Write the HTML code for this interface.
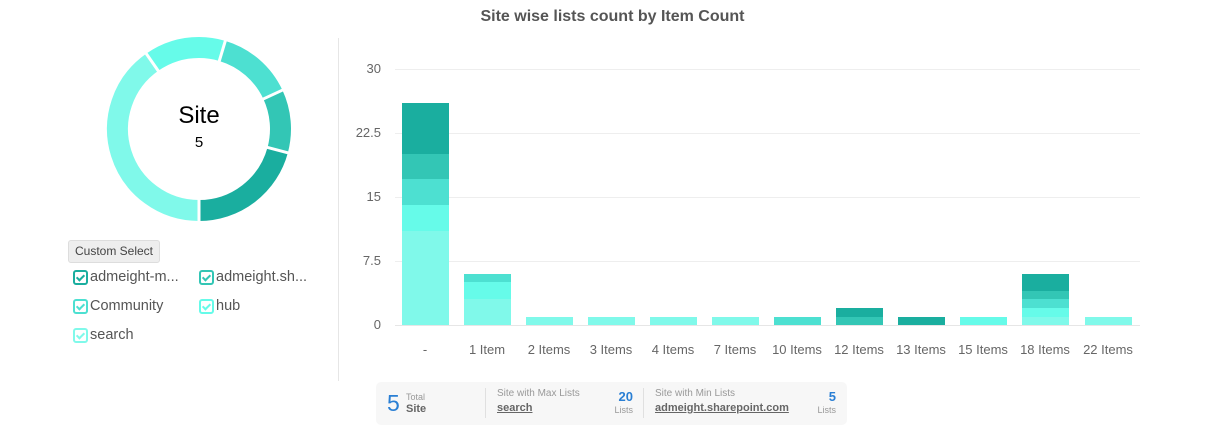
<!DOCTYPE html>
<html><head><meta charset="utf-8"><style>
body{margin:0;width:1213px;height:440px;background:#fff;font-family:"Liberation Sans",sans-serif;position:relative;overflow:hidden}
.a{position:absolute}
.t{font-size:16px;font-weight:bold;color:#555;left:0;width:1225px;text-align:center;top:8px}
.yl{font-size:13px;color:#666;right:832px;text-align:right}
.xl{font-size:13px;color:#666;width:70px;text-align:center;top:342px}
.bar{position:absolute;width:47px}
.cb{position:absolute;font-size:14.5px;color:#555;display:flex;align-items:center}
.cb i{display:inline-block;width:11px;height:11px;border:2px solid;border-radius:3px;margin-right:2px;position:relative;box-sizing:content-box}
.cb i:after{content:"";position:absolute;left:3px;top:1px;width:3px;height:6px;border:solid;border-width:0 2px 2px 0;transform:rotate(45deg);border-color:inherit}
</style></head><body>
<div class="a t">Site wise lists count by Item Count</div>
<svg class="a" style="left:0;top:0" width="340" height="240">
<g fill="none" stroke-width="21">
<path d="M199 47.5 A81.5 81.5 0 0 1 222.3 50.9" stroke="#66fbe9"/>
<path d="M152.3 62.2 A81.5 81.5 0 0 1 199 47.5" stroke="#66fbe9"/>
<path d="M222.3 50.9 A81.5 81.5 0 0 1 272.9 94.6" stroke="#4de0d1"/>
<path d="M272.9 94.6 A81.5 81.5 0 0 1 277.7 150.1" stroke="#33c6b5"/>
<path d="M277.7 150.1 A81.5 81.5 0 0 1 199 210.5" stroke="#1aae9f"/>
<path d="M199 210.5 A81.5 81.5 0 0 1 152.3 62.2" stroke="#80f9ea"/>
</g>
<g stroke="#fff" stroke-width="3">
<line x1="218.7" y1="62.9" x2="225.9" y2="38.9"/><line x1="261.5" y1="99.8" x2="284.2" y2="89.3"/>
<line x1="265.6" y1="146.9" x2="289.8" y2="153.3"/><line x1="199" y1="198" x2="199" y2="223"/>
<line x1="159.4" y1="72.5" x2="145.1" y2="52"/></g>
<text x="199" y="123" text-anchor="middle" font-size="24" fill="#000" font-family="Liberation Sans">Site</text>
<text x="199" y="147" text-anchor="middle" font-size="15" fill="#000" font-family="Liberation Sans">5</text>
</svg>
<div class="a" style="left:68px;top:240px;width:90px;height:21px;background:#eee;border:1px solid #ddd;border-radius:3px;font-size:12px;color:#444;text-align:center;line-height:21px">Custom Select</div>
<div class="cb" style="left:73px;top:269px"><i style="border-color:#1aae9f"></i>admeight-m...</div>
<div class="cb" style="left:199px;top:269px"><i style="border-color:#33c6b5"></i>admeight.sh...</div>
<div class="cb" style="left:73px;top:298px"><i style="border-color:#4de0d1"></i>Community</div>
<div class="cb" style="left:199px;top:298px"><i style="border-color:#66fbe9"></i>hub</div>
<div class="cb" style="left:73px;top:327px"><i style="border-color:#80f9ea"></i>search</div>
<div class="a" style="left:338px;top:38px;width:1px;height:343px;background:#e6e6e6"></div>
<div class="a" style="left:395px;top:69px;width:745px;height:1px;background:#eee"></div>
<div class="a" style="left:395px;top:133px;width:745px;height:1px;background:#eee"></div>
<div class="a" style="left:395px;top:197px;width:745px;height:1px;background:#eee"></div>
<div class="a" style="left:395px;top:261px;width:745px;height:1px;background:#eee"></div>
<div class="a" style="left:395px;top:325px;width:745px;height:1px;background:#e6e6e6"></div>
<div class="a yl" style="top:61px">30</div><div class="a yl" style="top:125px">22.5</div>
<div class="a yl" style="top:189px">15</div><div class="a yl" style="top:253px">7.5</div>
<div class="a yl" style="top:317px">0</div>
<div class="bar" style="left:402px;top:103px;height:51px;background:#1aae9f"></div>
<div class="bar" style="left:402px;top:154px;height:25px;background:#33c6b5"></div>
<div class="bar" style="left:402px;top:179px;height:26px;background:#4de0d1"></div>
<div class="bar" style="left:402px;top:205px;height:26px;background:#66fbe9"></div>
<div class="bar" style="left:402px;top:231px;height:94px;background:#80f9ea"></div>
<div class="bar" style="left:464px;top:274px;height:8px;background:#4de0d1"></div>
<div class="bar" style="left:464px;top:282px;height:17px;background:#66fbe9"></div>
<div class="bar" style="left:464px;top:299px;height:26px;background:#80f9ea"></div>
<div class="bar" style="left:526px;top:317px;height:8px;background:#80f9ea"></div>
<div class="bar" style="left:588px;top:317px;height:8px;background:#80f9ea"></div>
<div class="bar" style="left:650px;top:317px;height:8px;background:#80f9ea"></div>
<div class="bar" style="left:712px;top:317px;height:8px;background:#80f9ea"></div>
<div class="bar" style="left:774px;top:317px;height:8px;background:#4de0d1"></div>
<div class="bar" style="left:836px;top:308px;height:9px;background:#1aae9f"></div>
<div class="bar" style="left:836px;top:317px;height:8px;background:#33c6b5"></div>
<div class="bar" style="left:898px;top:317px;height:8px;background:#1aae9f"></div>
<div class="bar" style="left:960px;top:317px;height:8px;background:#66fbe9"></div>
<div class="bar" style="left:1022px;top:274px;height:17px;background:#1aae9f"></div>
<div class="bar" style="left:1022px;top:291px;height:8px;background:#33c6b5"></div>
<div class="bar" style="left:1022px;top:299px;height:9px;background:#4de0d1"></div>
<div class="bar" style="left:1022px;top:308px;height:9px;background:#66fbe9"></div>
<div class="bar" style="left:1022px;top:317px;height:8px;background:#80f9ea"></div>
<div class="bar" style="left:1085px;top:317px;height:8px;background:#80f9ea"></div>
<div class="a xl" style="left:390px">-</div>
<div class="a xl" style="left:452px">1 Item</div>
<div class="a xl" style="left:514px">2 Items</div>
<div class="a xl" style="left:576px">3 Items</div>
<div class="a xl" style="left:638px">4 Items</div>
<div class="a xl" style="left:700px">7 Items</div>
<div class="a xl" style="left:762px">10 Items</div>
<div class="a xl" style="left:824px">12 Items</div>
<div class="a xl" style="left:886px">13 Items</div>
<div class="a xl" style="left:948px">15 Items</div>
<div class="a xl" style="left:1010px">18 Items</div>
<div class="a xl" style="left:1073px">22 Items</div>
<div class="a" style="left:376px;top:382px;width:471px;height:43px;background:#f7f7f7;border-radius:5px"></div>
<div class="a" style="left:387px;top:390px;font-size:23px;color:#2a7fd4">5</div>
<div class="a" style="left:406px;top:392px;font-size:9px;color:#999">Total</div>
<div class="a" style="left:406px;top:403px;font-size:11px;color:#666;font-weight:bold">Site</div>
<div class="a" style="left:485px;top:388px;width:1px;height:30px;background:#e0e0e0"></div>
<div class="a" style="left:497px;top:388px;font-size:10px;color:#999">Site with Max Lists</div>
<div class="a" style="left:497px;top:402px;font-size:11px;color:#666;font-weight:bold;text-decoration:underline">search</div>
<div class="a" style="left:600px;top:389px;width:33px;text-align:right;font-size:13px;color:#2a7fd4;font-weight:bold">20</div>
<div class="a" style="left:600px;top:405px;width:33px;text-align:right;font-size:9px;color:#999">Lists</div>
<div class="a" style="left:643px;top:388px;width:1px;height:30px;background:#e0e0e0"></div>
<div class="a" style="left:655px;top:388px;font-size:10px;color:#999">Site with Min Lists</div>
<div class="a" style="left:655px;top:402px;font-size:11px;color:#666;font-weight:bold;text-decoration:underline">admeight.sharepoint.com</div>
<div class="a" style="left:800px;top:389px;width:36px;text-align:right;font-size:13px;color:#2a7fd4;font-weight:bold">5</div>
<div class="a" style="left:800px;top:405px;width:36px;text-align:right;font-size:9px;color:#999">Lists</div>
</body></html>
